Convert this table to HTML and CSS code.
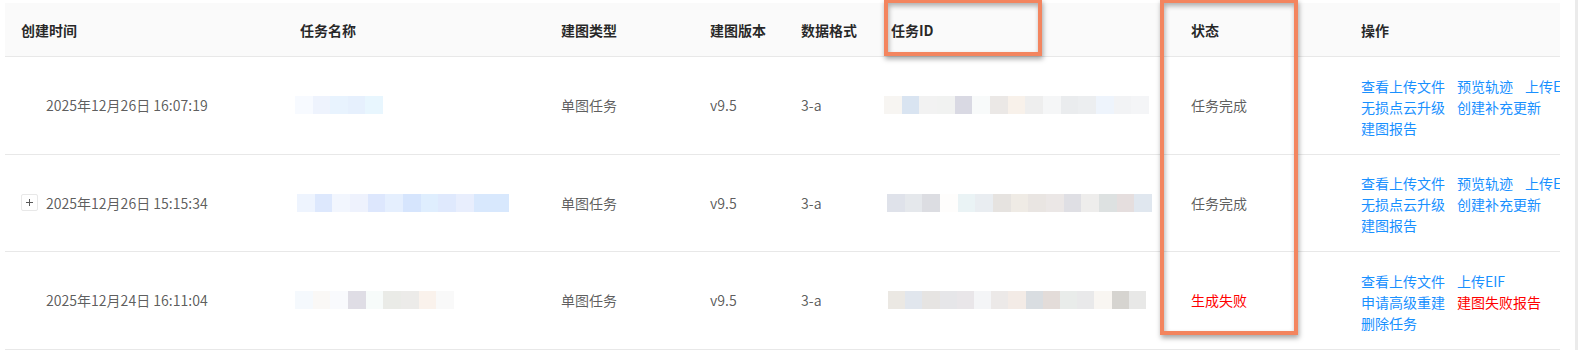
FILE: index.html
```html
<!DOCTYPE html>
<html lang="zh-CN">
<head>
<meta charset="utf-8">
<title>任务列表</title>
<link rel="stylesheet" href="styles.css">
</head>
<body>
<div class="page">
  <div class="table-wrap">
    <div class="table">
      <div class="row head">
        <div class="cell">创建时间</div>
        <div class="cell">任务名称</div>
        <div class="cell">建图类型</div>
        <div class="cell">建图版本</div>
        <div class="cell">数据格式</div>
        <div class="cell">任务ID</div>
        <div class="cell">状态</div>
        <div class="cell">操作</div>
      </div>

      <div class="row">
        <div class="cell"><span class="expand-space"></span>2025年12月26日 16:07:19</div>
        <div class="cell"><span class="mosaic m-name1"></span></div>
        <div class="cell">单图任务</div>
        <div class="cell">v9.5</div>
        <div class="cell">3-a</div>
        <div class="cell"><span class="mosaic m-id1"></span></div>
        <div class="cell">任务完成</div>
        <div class="cell">
          <div class="actions">
            <a class="link">查看上传文件</a>
            <a class="link">预览轨迹</a>
            <a class="link">上传EIF</a>
            <a class="link">无损点云升级</a>
            <a class="link">创建补充更新</a>
            <a class="link">建图报告</a>
          </div>
        </div>
      </div>

      <div class="row">
        <div class="cell"><span class="expand-btn"></span>2025年12月26日 15:15:34</div>
        <div class="cell"><span class="mosaic m-name2"></span></div>
        <div class="cell">单图任务</div>
        <div class="cell">v9.5</div>
        <div class="cell">3-a</div>
        <div class="cell"><span class="mosaic m-id2"></span></div>
        <div class="cell">任务完成</div>
        <div class="cell">
          <div class="actions">
            <a class="link">查看上传文件</a>
            <a class="link">预览轨迹</a>
            <a class="link">上传EIF</a>
            <a class="link">无损点云升级</a>
            <a class="link">创建补充更新</a>
            <a class="link">建图报告</a>
          </div>
        </div>
      </div>

      <div class="row">
        <div class="cell"><span class="expand-space"></span>2025年12月24日 16:11:04</div>
        <div class="cell"><span class="mosaic m-name3"></span></div>
        <div class="cell">单图任务</div>
        <div class="cell">v9.5</div>
        <div class="cell">3-a</div>
        <div class="cell"><span class="mosaic m-id3"></span></div>
        <div class="cell status-fail">生成失败</div>
        <div class="cell">
          <div class="actions">
            <a class="link">查看上传文件</a>
            <a class="link">上传EIF</a>
            <a class="link">申请高级重建</a>
            <a class="link danger">建图失败报告</a>
            <a class="link">删除任务</a>
          </div>
        </div>
      </div>
    </div>
  </div>
  <div class="scrollbar"></div>

  <div class="mark mark-id"></div>
  <div class="mark mark-status"></div>
</div>
</body>
</html>
```

FILE: styles.css
```css
* { box-sizing: border-box; }

html, body {
  margin: 0;
  padding: 0;
  background: #fff;
}

body {
  font-family: "Noto Sans CJK SC", "Noto Sans", sans-serif;
  font-size: 14px;
  color: rgba(0, 0, 0, 0.65);
}

.page {
  position: relative;
  width: 1578px;
  height: 350px;
  display: flex;
  justify-content: space-between;
  padding: 3px 0 0 5px;
  overflow: hidden;
}

.table-wrap {
  width: 1555px;
  overflow: hidden;
}

.table {
  width: 1592px;
}

.row {
  display: grid;
  grid-template-columns: 279px 261px 149px 91px 90px 300px 170px 252px;
  height: 97.5px;
  border-bottom: 1px solid #e8e8e8;
}

.row.head {
  height: 54px;
  background: #fafafa;
  color: rgba(0, 0, 0, 0.85);
  font-weight: 700;
}

.cell {
  display: flex;
  align-items: center;
  padding: 0 16px;
  white-space: nowrap;
  min-width: 0;
}

.expand-space {
  display: inline-block;
  width: 17px;
  height: 17px;
  margin-right: 8px;
  flex: none;
}

.expand-btn {
  position: relative;
  display: inline-block;
  width: 17px;
  height: 17px;
  margin-right: 8px;
  border: 1px solid #e8e8e8;
  border-radius: 2px;
  background: #fff;
  flex: none;
}

.expand-btn::before,
.expand-btn::after {
  content: "";
  position: absolute;
  background: #595959;
}

.expand-btn::before {
  left: 4px;
  right: 4px;
  top: 7px;
  height: 1px;
}

.expand-btn::after {
  top: 4px;
  bottom: 4px;
  left: 7px;
  width: 1px;
}

.mosaic {
  display: block;
  height: 18px;
  flex: none;
}

.m-name1 {
  width: 88px;
  margin-left: -5px;
  background: linear-gradient(90deg,
    #f7faff 0 20%, #eef3fd 20% 40%, #e8f3fe 40% 60%, #e6f0fd 60% 80%, #e8f6fe 80% 100%);
}

.m-name2 {
  width: 212px;
  margin-left: -3px;
  background: linear-gradient(90deg,
    #eef4fe 0 8.33%, #dde8fd 8.33% 16.67%, #f2f6fe 16.67% 25%, #eef2fd 25% 33.33%,
    #dde7fd 33.33% 41.67%, #e5effe 41.67% 50%, #d6e5fd 50% 58.33%, #dfeefe 58.33% 66.67%,
    #dfe9fd 66.67% 75%, #e8eefd 75% 83.33%, #d8e8fd 83.33% 100%);
}

.m-name3 {
  width: 159px;
  margin-left: -5px;
  background: linear-gradient(90deg,
    #f5f9fd 0 11.11%, #faf8f6 11.11% 22.22%, #f9fafd 22.22% 33.33%, #dfdde5 33.33% 44.44%,
    #f7fbfa 44.44% 55.56%, #eaebe7 55.56% 66.67%, #ecebe9 66.67% 77.78%, #faf2ec 77.78% 88.89%,
    #f9f9f9 88.89% 100%);
}

.m-id1 {
  width: 265px;
  margin-left: -7px;
  background: linear-gradient(90deg,
    #f7f5f2 0 6.67%, #d9e4f1 6.67% 13.33%, #f2f2f2 13.33% 20%, #f1f2f1 20% 26.67%,
    #d9d9e3 26.67% 33.33%, #f8fafa 33.33% 40%, #ebe8e6 40% 46.67%, #f8f1ea 46.67% 53.33%,
    #eeeeee 53.33% 60%, #f5f6f7 60% 66.67%, #eaecee 66.67% 73.33%, #eceef0 73.33% 80%,
    #eef4fc 80% 86.67%, #f2f3f5 86.67% 93.33%, #f4f5f7 93.33% 100%);
}

.m-id2 {
  width: 265px;
  margin-left: -4px;
  background: linear-gradient(90deg,
    #dfe2ea 0 6.67%, #e5e8ec 6.67% 13.33%, #dcdde2 13.33% 20%, #fefdfc 20% 26.67%,
    #eaf3f5 26.67% 33.33%, #e9edf1 33.33% 40%, #e6e3e0 40% 46.67%, #efebe5 46.67% 53.33%,
    #e9e5e2 53.33% 60%, #ebe7e6 60% 66.67%, #dfdfe4 66.67% 73.33%, #eeedec 73.33% 80%,
    #dde1e1 80% 86.67%, #e5dede 86.67% 93.33%, #e0e7ef 93.33% 100%);
}

.m-id3 {
  width: 258px;
  margin-left: -3px;
  background: linear-gradient(90deg,
    #ebe8e3 0 6.67%, #e1e6ed 6.67% 13.33%, #e6e4e2 13.33% 20%, #e6e6e9 20% 26.67%,
    #e9e6e9 26.67% 33.33%, #f4f5f7 33.33% 40%, #ece9e8 40% 46.67%, #f3ebe6 46.67% 53.33%,
    #d9dde1 53.33% 60%, #e3dcd9 60% 66.67%, #e9ecea 66.67% 73.33%, #e9e9ea 73.33% 80%,
    #f9f6f2 80% 86.67%, #d6d4d0 86.67% 93.33%, #e8e8e7 93.33% 100%);
}

.status-fail {
  color: #ff0000;
}

.actions {
  display: flex;
  flex-wrap: wrap;
  column-gap: 12px;
  width: 220px;
  margin-top: 4px;
  line-height: 21px;
}

.link {
  color: #1890ff;
  cursor: pointer;
  white-space: nowrap;
}

.link.danger {
  color: #ff0000;
}

.scrollbar {
  width: 3px;
  margin-top: -3px;
  background: #ebebeb;
  flex: none;
}

.mark {
  position: absolute;
  border: 4px solid #f3855f;
  box-shadow: 1px 3px 5px rgba(0, 0, 0, 0.35), inset 1px 3px 5px rgba(0, 0, 0, 0.3);
  pointer-events: none;
}

.mark-id {
  left: 884px;
  top: -1px;
  width: 158px;
  height: 57px;
}

.mark-status {
  left: 1160px;
  top: -1px;
  width: 138px;
  height: 336px;
}
```
